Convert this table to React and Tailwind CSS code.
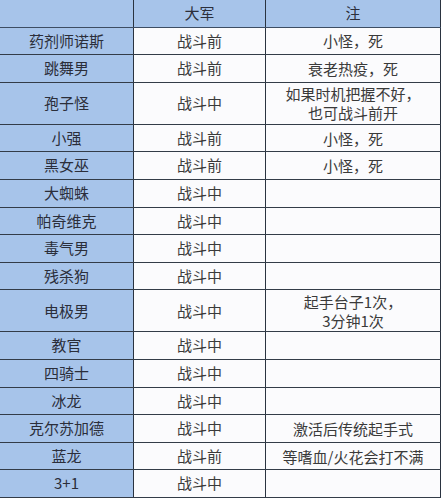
import React from "react";

const rows = [
    { name: "药剂师诺斯", army: "战斗前", note: ["小怪，死"] },
    { name: "跳舞男", army: "战斗前", note: ["衰老热疫，死"] },
    { name: "孢子怪", army: "战斗中", note: ["如果时机把握不好，", "也可战斗前开"], tall: true },
    { name: "小强", army: "战斗前", note: ["小怪，死"] },
    { name: "黑女巫", army: "战斗前", note: ["小怪，死"] },
    { name: "大蜘蛛", army: "战斗中", note: [] },
    { name: "帕奇维克", army: "战斗中", note: [] },
    { name: "毒气男", army: "战斗中", note: [] },
    { name: "残杀狗", army: "战斗中", note: [] },
    { name: "电极男", army: "战斗中", note: ["起手台子1次，", "3分钟1次"], tall: true },
    { name: "教官", army: "战斗中", note: [] },
    { name: "四骑士", army: "战斗中", note: [] },
    { name: "冰龙", army: "战斗中", note: [] },
    { name: "克尔苏加德", army: "战斗中", note: ["激活后传统起手式"] },
    { name: "蓝龙", army: "战斗前", note: ["等嗜血/火花会打不满"] },
    { name: "3+1", army: "战斗中", note: [] },
];

const Row = ({ row }) => (
    <div
        className={`grid grid-cols-[134px_132px_175px] border-b border-[#333c48] ${
            row.tall ? "h-[42px]" : "h-[27.6px]"
        }`}
    >
        <div className="bg-[#a7c4ea] border-r border-[#2a3340] flex items-center justify-center text-[#2b2e3a]">
            {row.name}
        </div>
        <div className="bg-[#fbfbfd] border-r border-[#2a3340] flex items-center justify-center text-[#3a3a3a]">
            {row.army}
        </div>
        <div className="bg-[#fbfbfd] border-r border-[#2a3340] flex flex-col items-center justify-center text-[#3a3a3a] leading-[19px]">
            {row.note.map((line, i) => (
                <span key={i}>{line}</span>
            ))}
        </div>
    </div>
);

export default function App() {
    return (
        <div
            className="w-[441px] h-[500px] bg-white text-[15px] overflow-hidden"
            style={{ fontFamily: '"Noto Sans CJK SC", "Noto Sans", sans-serif' }}
        >
            {/* header */}
            <div className="grid grid-cols-[134px_132px_175px] h-[27.6px] border-b border-[#3d4d63] bg-[#a7c4ea]">
                <div className="border-r border-[#2a3340]"></div>
                <div className="border-r border-[#2a3340] flex items-center justify-center text-[#2b2e3a]">
                    大军
                </div>
                <div className="border-r border-[#2a3340] flex items-center justify-center text-[#2b2e3a]">
                    注
                </div>
            </div>
            {rows.map((row, i) => (
                <Row key={i} row={row} />
            ))}
        </div>
    );
}
